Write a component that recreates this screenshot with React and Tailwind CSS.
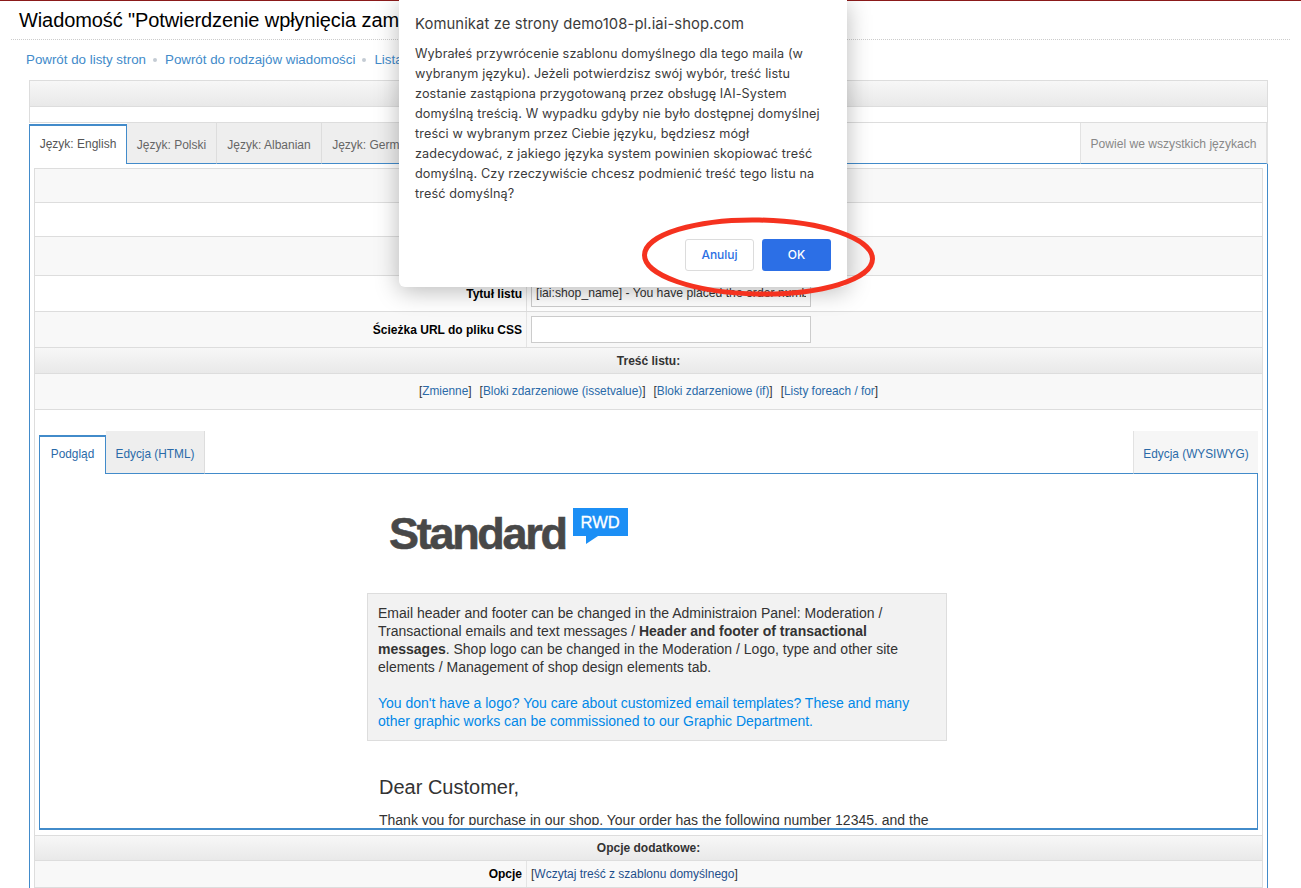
const sans = '"Liberation Sans", Arial, sans-serif';

const langTabs = [
  { label: 'Język: Polski', w: 'w-[90px]' },
  { label: 'Język: Albanian', w: 'w-[105px]' },
  { label: 'Język: German', w: 'w-[102px]' },
];

const Band = () => (
  <div className="h-[26px] bg-gradient-to-b from-[#f7f7f7] to-[#e9e9e9] border-b border-[#dddddd]" />
);

const Row = ({ label, bg = 'bg-white', h = 'h-[36px]', children }) => (
  <div className={`flex border-b border-[#dddddd] ${bg} ${h}`}>
    <div className="w-[492px] shrink-0 flex items-center justify-end pr-[4px] text-[12px] font-bold text-black border-r border-[#e4e4e4]">
      {label}
    </div>
    <div className="flex-1 flex items-center pl-[4px] text-[12px]">{children}</div>
  </div>
);

const EmailPreview = () => (
  <div className="h-[356px] border-x border-b-2 border-[#428bca] pl-[327px]">
    <div className="h-[351px] overflow-hidden">
      <div className="flex items-start pl-[22px] pt-[34px] h-[119px]">
        <span className="text-[45px] leading-[54px] font-bold tracking-[-2.3px] text-[#484848] mt-[-1px] [-webkit-text-stroke:0.6px_#484848]">
          Standard
        </span>
        <div className="relative ml-[7px] w-[55px] h-[28px] bg-[#1c8ff5] text-white text-[16.5px] leading-[28px] text-center [-webkit-text-stroke:0.3px_#ffffff]">
          RWD
          <svg className="absolute left-[13px] top-[28px]" width="12" height="8" viewBox="0 0 12 8">
            <path d="M0 0 H12 L0 8 Z" fill="#1c8ff5" />
          </svg>
        </div>
      </div>
      <div className="w-[580px] h-[148px] bg-[#f2f2f2] border border-[#dddddd] px-[10px] pt-[10px] text-[14px] leading-[18px] text-[#333333]">
        <p>
          Email header and footer can be changed in the Administraion Panel: Moderation / Transactional emails and text
          messages / <b>Header and footer of transactional messages</b>. Shop logo can be changed in the Moderation / Logo,
          type and other site elements / Management of shop design elements tab.
        </p>
        <p className="mt-[18px] text-[#0088e8]">
          You don't have a logo? You care about customized email templates? These and many other graphic works can be
          commissioned to our Graphic Department.
        </p>
      </div>
      <div className="pl-[12px] w-[580px] text-[#333333]">
        <p className="mt-[32px] text-[20px] leading-[28px]">Dear Customer,</p>
        <p className="mt-[10px] text-[14px] leading-[18px]">
          Thank you for purchase in our shop. Your order has the following number 12345, and the
        </p>
      </div>
    </div>
  </div>
);

const Dialog = () => (
  <div className="absolute left-[399px] top-0 w-[448px] h-[287px] bg-white rounded-b-[6px] shadow-[0_4px_24px_rgba(0,0,0,0.28)] px-[16px] font-['Inter',sans-serif] text-[#3b3b3b]">
    <p className="pt-[14px] text-[14.8px] leading-[20px] tracking-[0.1px] whitespace-nowrap">
      Komunikat ze strony demo108-pl.iai-shop.com
    </p>
    <p className="mt-[10px] text-[12.65px] leading-[20px] tracking-[0.12px] whitespace-nowrap">
      Wybrałeś przywrócenie szablonu domyślnego dla tego maila (w
      <br />
      wybranym języku). Jeżeli potwierdzisz swój wybór, treść listu
      <br />
      zostanie zastąpiona przygotowaną przez obsługę IAI-System
      <br />
      domyślną treścią. W wypadku gdyby nie było dostępnej domyślnej
      <br />
      treści w wybranym przez Ciebie języku, będziesz mógł
      <br />
      zadecydować, z jakiego języka system powinien skopiować treść
      <br />
      domyślną. Czy rzeczywiście chcesz podmienić treść tego listu na
      <br />
      treść domyślną?
    </p>
    <div className="flex justify-end gap-[8px] mt-[35px]">
      <button className="w-[69px] h-[32px] rounded-[3px] border border-[#dcdcdc] bg-white text-[#2b6fe3] text-[12px] font-medium">
        Anuluj
      </button>
      <button className="w-[69px] h-[32px] rounded-[3px] bg-[#2c6fe6] text-white text-[12px] font-medium">OK</button>
    </div>
  </div>
);

export default function App() {
  return (
    <div className="relative h-[888px] overflow-hidden bg-white" style={{ fontFamily: sans }}>
      <div className="h-[1px] bg-[#8b1a1a]" />
      <div className="mx-[11px] h-[39px] border-b border-dotted border-[#cccccc] pl-[8px]">
        <h1 className="pt-[7px] text-[20px] leading-[24px] tracking-[-0.1px] text-black whitespace-nowrap">
          Wiadomość "Potwierdzenie wpłynięcia zamówienia"
        </h1>
      </div>

      <div className="flex items-center h-[40px] pl-[26px] text-[13.33px] text-[#428bca]">
        <a>Powrót do listy stron</a>
        <span className="mx-[7px] w-[4px] h-[4px] rounded-full bg-[#c4ccd4]" />
        <a className="ml-[1px]">Powrót do rodzajów wiadomości</a>
        <span className="mx-[7px] w-[4px] h-[4px] rounded-full bg-[#c4ccd4]" />
        <a className="ml-[1px]">Lista</a>
      </div>

      <div className="ml-[29px] w-[1239px]">
        <div className="border-x border-t border-[#dddddd]">
          <Band />
          <div className="h-[15px] bg-white" />
        </div>

        {/* zakładki języków */}
        <div className="flex h-[42px] border-t border-[#dddddd] text-[12px] -mb-px relative">
          <div className="w-[98px] mt-[1px] pb-[2px] bg-white border-x border-t-2 border-[#428bca] flex items-center justify-center text-[#555555] z-10">
            Język: English
          </div>
          {langTabs.map(tab => (
            <div
              key={tab.label}
              className={`${tab.w} pt-[3px] bg-[#eeeeee] border-r border-b border-[#dddddd] border-b-[#428bca] flex items-center justify-center text-[#666666]`}
            >
              {tab.label}
            </div>
          ))}
          <div className="flex-1 border-b border-[#428bca]" />
          <div className="w-[188px] pt-[3px] bg-[#f6f6f6] border-l border-r-2 border-[#e2e2e2] border-b border-b-[#428bca] flex items-center justify-center text-[12.1px] text-[#888888]">
            Powiel we wszystkich językach
          </div>
        </div>

        <div className="border-x border-[#428bca] px-[4px] pt-[5px] h-[730px]">
          <div className="border-x border-t border-[#dddddd] w-[1229px]">
            <div className="h-[34px] bg-[#f8f8f8] border-b border-[#dddddd]" />
            <div className="h-[34px] bg-white border-b border-[#dddddd]" />
            <div className="h-[39px] bg-[#f8f8f8] border-b border-[#dddddd]" />
            <Row label="Tytuł listu">
              <div className="w-[280px] h-[27px] border border-[#cccccc] px-[4px] text-[12.2px] leading-[25px] text-[#333333]">
                <div className="overflow-hidden whitespace-nowrap">[iai:shop_name] - You have placed the order number</div>
              </div>
            </Row>
            <Row label="Ścieżka URL do pliku CSS" bg="bg-[#f8f8f8]">
              <div className="w-[280px] h-[27px] border border-[#cccccc] bg-white" />
            </Row>
            <div className="h-[26px] bg-gradient-to-b from-[#f7f7f7] to-[#e9e9e9] border-b border-[#dddddd] flex items-center justify-center text-[12px] font-bold text-[#333333]">
              Treść listu:
            </div>
            <div className="h-[36px] bg-[#f8f8f8] border-b border-[#dddddd] flex items-center justify-center gap-[8px] text-[11.85px] text-[#333333]">
              <span>[<a className="text-[#2a6aa8]">Zmienne</a>]</span>
              <span>[<a className="text-[#2a6aa8]">Bloki zdarzeniowe (issetvalue)</a>]</span>
              <span>[<a className="text-[#2a6aa8]">Bloki zdarzeniowe (if)</a>]</span>
              <span>[<a className="text-[#2a6aa8]">Listy foreach / for</a>]</span>
            </div>

            <div className="pl-[4px] pr-[4px] pt-[21px] pb-[5px] bg-white">
              <div className="flex h-[43px] text-[11.85px] text-[#2a6aa8]">
                <div className="w-[67px] mt-[4px] pb-[1px] bg-white border-x border-t-2 border-[#428bca] flex items-center justify-center">
                  Podgląd
                </div>
                <div className="w-[99px] pt-[5px] bg-[#eeeeee] border-r border-[#dddddd] border-b border-b-[#428bca] flex items-center justify-center">
                  Edycja (HTML)
                </div>
                <div className="flex-1 border-b border-[#428bca]" />
                <div className="w-[125px] pt-[5px] bg-[#f6f6f6] border-l border-[#e2e2e2] border-b border-b-[#428bca] flex items-center justify-center">
                  Edycja (WYSIWYG)
                </div>
              </div>
              <EmailPreview />
            </div>

            <div className="h-[26px] border-t border-[#dddddd] bg-gradient-to-b from-[#f7f7f7] to-[#e9e9e9] border-b flex items-center justify-center text-[12px] font-bold text-[#333333]">
              Opcje dodatkowe:
            </div>
            <Row label="Opcje" bg="bg-[#f8f8f8]" h="h-[27px]">
              <span className="text-[#333333]">
                [<a className="text-[#1f4f8b]">Wczytaj treść z szablonu domyślnego</a>]
              </span>
            </Row>
          </div>
        </div>
      </div>

      <Dialog />

      {/* czerwona obwódka wokół przycisków */}
      <svg className="absolute left-[640px] top-[215px]" width="240" height="85" viewBox="0 0 240 85" fill="none">
        <ellipse cx="118.5" cy="42" rx="114" ry="37" stroke="#f5321f" strokeWidth="5" transform="rotate(1 118 42)" />
      </svg>
    </div>
  );
}
